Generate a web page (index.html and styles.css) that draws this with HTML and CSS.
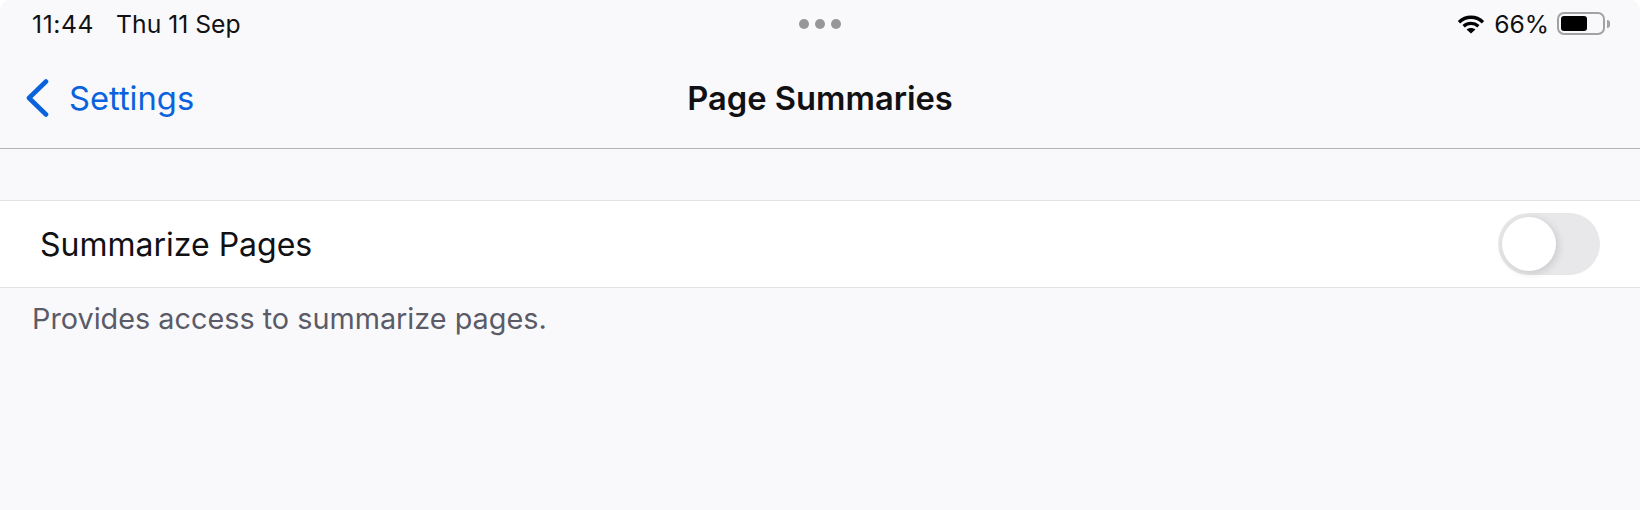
FILE: index.html
```html
<!DOCTYPE html>
<html lang="en">
<head>
    <meta charset="UTF-8">
    <title>Page Summaries</title>
    <link rel="stylesheet" href="styles.css">
</head>
<body>
    <div class="screen">
        <header class="top">
            <div class="status-bar">
                <div class="status-left">
                    <span class="time">11:44</span>
                    <span>Thu 11 Sep</span>
                </div>
                <div class="dots"><i></i><i></i><i></i></div>
                <div class="status-right">
                    <svg class="wifi" width="28" height="20" viewBox="0 0 28 20">
                        <path d="M2 8.2 C9 1.6 19 1.6 26 8.2" fill="none" stroke="#000" stroke-width="3.4"/>
                        <path d="M6.6 12.2 C11 8.4 17 8.4 21.4 12.2" fill="none" stroke="#000" stroke-width="3.4"/>
                        <path d="M14 19.5 L9.6 15.4 C12 13.4 16 13.4 18.4 15.4 Z" fill="#000"/>
                    </svg>
                    <span>66%</span>
                    <div class="battery">
                        <div class="battery-level"></div>
                    </div>
                    <div class="battery-cap"></div>
                </div>
            </div>
            <nav class="nav-bar">
                <a class="back" href="#">
                    <svg width="24" height="38" viewBox="0 0 24 38">
                        <path d="M21 2.5 L4 19 L21 35.5" fill="none" stroke="#0a63dc" stroke-width="4.6" stroke-linecap="round" stroke-linejoin="round"/>
                    </svg>
                    <span>Settings</span>
                </a>
                <h1>Page Summaries</h1>
            </nav>
        </header>

        <main>
            <div class="row">
                <span>Summarize Pages</span>
                <div class="toggle"><div class="knob"></div></div>
            </div>
            <p class="note">Provides access to summarize pages.</p>
        </main>
    </div>
</body>
</html>
```

FILE: styles.css
```css
* {
    box-sizing: border-box;
}

html, body {
    margin: 0;
    height: 100%;
    background: #fff;
}

.screen {
    height: 510px;
    background: #f9f9fc;
    border-radius: 10px 10px 0 0;
    font-family: Inter, "Liberation Sans", sans-serif;
    color: #111114;
    overflow: hidden;
}

/* barra de estado */
.top {
    height: 149px;
    border-bottom: 1px solid #b4b4b6;
}

.status-bar {
    display: flex;
    justify-content: space-between;
    align-items: center;
    height: 47px;
    padding: 0 30px 0 32px;
    font-size: 24.7px;
    position: relative;
}

.status-left {
    display: flex;
    align-items: baseline;
    gap: 22px;
}

.time {
    letter-spacing: 0.6px;
}

.dots {
    display: flex;
    gap: 6px;
    position: absolute;
    left: 799px;
    top: 19px;
}

.dots i {
    width: 10px;
    height: 10px;
    border-radius: 50%;
    background: #979799;
}

.status-right {
    display: flex;
    align-items: center;
}

.status-right span {
    margin: 0 8px 0 9px;
}

.battery {
    width: 48px;
    height: 23px;
    border: 2px solid #a2a2a4;
    border-radius: 7px;
    padding: 2px;
}

.battery-level {
    width: 26px;
    height: 15px;
    background: #000;
    border-radius: 3px;
}

.battery-cap {
    width: 3px;
    height: 8px;
    margin-left: 2px;
    background: #a2a2a4;
    border-radius: 0 3px 3px 0;
}

/* barra de navegacion */
.nav-bar {
    display: flex;
    align-items: center;
    height: 101px;
    position: relative;
}

.back {
    display: flex;
    align-items: center;
    gap: 20px;
    margin-left: 25px;
    color: #0a63dc;
    font-size: 32.7px;
    text-decoration: none;
}

h1 {
    position: absolute;
    left: 0;
    right: 0;
    margin: 0;
    text-align: center;
    font-size: 32.7px;
    font-weight: 600;
}

/* contenido */
main {
    padding-top: 51px;
}

.row {
    display: flex;
    justify-content: space-between;
    align-items: center;
    height: 88px;
    padding: 0 40px 0 40px;
    background: #fff;
    border-top: 1px solid #e2e2e6;
    border-bottom: 1px solid #e2e2e6;
    font-size: 32px;
}

.toggle {
    width: 102px;
    height: 62px;
    padding: 4px;
    background: #e8e8ea;
    border-radius: 31px;
}

.knob {
    width: 54px;
    height: 54px;
    background: #fff;
    border-radius: 50%;
    box-shadow: 2px 2px 8px rgba(0, 0, 0, 0.14);
}

.note {
    margin: 13px 0 0 32px;
    font-size: 28.8px;
    color: #5b5b68;
}
```
